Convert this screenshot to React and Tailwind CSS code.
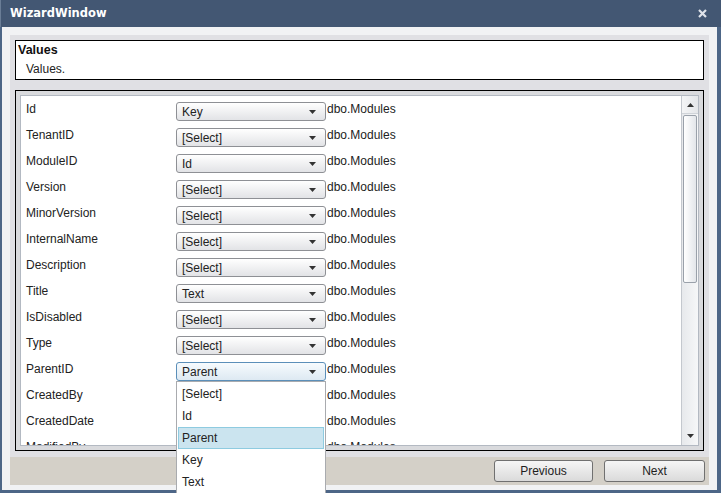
const rows = [
  ["Id", "Key"],
  ["TenantID", "[Select]"],
  ["ModuleID", "Id"],
  ["Version", "[Select]"],
  ["MinorVersion", "[Select]"],
  ["InternalName", "[Select]"],
  ["Description", "[Select]"],
  ["Title", "Text"],
  ["IsDisabled", "[Select]"],
  ["Type", "[Select]"],
  ["ParentID", "Parent"],
  ["CreatedBy", "[Select]"],
  ["CreatedDate", "[Select]"],
  ["ModifiedBy", "[Select]"],
  ["ModifiedDate", "[Select]"],
];

const options = ["[Select]", "Id", "Parent", "Key", "Text"];

function Arrow({ up }) {
  return (
    <svg width="7" height="4" viewBox="0 0 7 4" className="shrink-0">
      <path d={up ? "M0 4 L3.5 0 L7 4 Z" : "M0 0 L7 0 L3.5 4 Z"} fill="#333" />
    </svg>
  );
}

function Select({ value, open }) {
  return (
    <div
      className={`mt-[2px] w-[150px] h-[19px] shrink-0 rounded-[3px] border flex items-center justify-between pl-[5px] pr-[9px] bg-linear-to-b ${
        open
          ? "border-[#5b8fb9] from-[#f7fbfe] to-[#dde9f2]"
          : "border-[#8e9095] from-white to-[#e2e3e6]"
      }`}
    >
      <span className="leading-none">{value}</span>
      <Arrow />
    </div>
  );
}

function Button({ children, width }) {
  return (
    <button
      className={`${width} h-[22px] rounded-[3px] border border-[#707070] bg-linear-to-b from-[#f6f6f6] to-[#dadada] text-[12px] text-[#1e1e1e]`}
    >
      {children}
    </button>
  );
}

export default function App() {
  return (
    <div
      className="relative w-[721px] h-[493px] overflow-hidden flex flex-col bg-[#f1f2f4] text-[12px] text-[#222]"
      style={{ fontFamily: '"Liberation Sans", Arial, sans-serif' }}
    >
      <div className="h-[27px] shrink-0 bg-[#435773] flex items-center justify-between pl-[9px] pr-[14px] border-l border-[#6a7d96]">
        <span
          className="text-white font-bold text-[11.5px]"
          style={{ fontFamily: '"DejaVu Sans", Verdana, sans-serif' }}
        >
          WizardWindow
        </span>
        <svg width="9" height="9" viewBox="0 0 9 9">
          <path d="M1 1 L8 8 M8 1 L1 8" stroke="#dfe3ea" strokeWidth="2.2" />
        </svg>
      </div>

      <div className="flex-1 flex flex-col border-l-[2px] border-r-[4px] border-b-[3px] border-[#4d6687] px-[8px] pt-[8px] pb-[5px]">
        <div className="h-[422px] bg-[#e0e0e4] px-[5px] pt-[5px] flex flex-col gap-[10px]">
          <div className="h-[40px] bg-white border border-black pl-[2px] leading-[19px]">
            <div className="font-bold text-[12.5px] text-[#111]">Values</div>
            <div className="pl-[8px]">Values.</div>
          </div>

          <div className="h-[361px] border border-black bg-[#d9dadd] p-[4px] flex">
            <div className="flex-1 flex border border-[#b3b9c2] bg-white">
              <div className="flex-1 overflow-hidden pt-[4px] pl-[5px]">
                {rows.map(([label, value]) => (
                  <div key={label} className="h-[26px] flex items-start">
                    <span className="w-[150px] shrink-0 pt-[1px] leading-[16px]">{label}</span>
                    <Select value={value} open={label === "ParentID"} />
                    <span className="pt-[1px] leading-[16px] pl-[1px]">dbo.Modules</span>
                  </div>
                ))}
              </div>

              <div className="w-[17px] shrink-0 flex flex-col border-l border-[#c4c8ce] bg-linear-to-r from-[#e7e9ec] to-[#f6f7f8]">
                <div className="h-[18px] flex items-center justify-center border-b border-[#d0d4d9] bg-linear-to-r from-[#f4f5f6] to-[#e4e6e9]">
                  <Arrow up />
                </div>
                <div className="mt-[1px] mx-[1px] h-[168px] rounded-[2px] border border-[#9aa1aa] bg-linear-to-r from-white to-[#e3e6ea]" />
                <div className="flex-1" />
                <div className="h-[18px] flex items-center justify-center">
                  <Arrow />
                </div>
              </div>
            </div>
          </div>
        </div>

        <div className="h-[28px] bg-[#d4d0c8] flex items-center justify-end gap-[11px] pr-[4px]">
          <Button width="w-[99px]">Previous</Button>
          <Button width="w-[101px]">Next</Button>
        </div>
      </div>

      <div className="absolute left-[176px] top-[381px] w-[150px] h-[120px] bg-white border border-[#a9abaf] p-[1px]">
        {options.map((o) => (
          <div
            key={o}
            className={`h-[22px] flex items-center px-[3px] ${
              o === "Parent" ? "bg-[#cbe4ef] border border-[#8ecbe0]" : "border border-transparent"
            }`}
          >
            {o}
          </div>
        ))}
      </div>
    </div>
  );
}
